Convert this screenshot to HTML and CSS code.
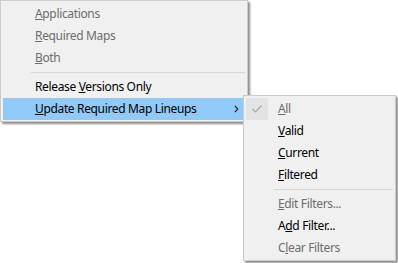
FILE: index.html
```html
<!DOCTYPE html>
<html>
<head>
<meta charset="utf-8">
<link rel="stylesheet" href="styles.css">
</head>
<body>
<div class="menu main">
  <div class="item disabled"><span class="label"><u>A</u>pplications</span></div>
  <div class="item disabled"><span class="label"><u>R</u>equired Maps</span></div>
  <div class="item disabled"><span class="label"><u>B</u>oth</span></div>
  <div class="sep"></div>
  <div class="item"><span class="label">Release <u>V</u>ersions Only</span></div>
  <div class="item active"><span class="label"><u>U</u>pdate Required Map Lineups</span>
    <svg class="arrow" width="5" height="8" viewBox="0 0 5 8"><polyline points="0.8,0.8 3.8,4 0.8,7.2" fill="none" stroke="#1a1a1a" stroke-width="1.1"/></svg>
  </div>
</div>
<div class="menu sub">
  <div class="item disabled checked">
    <span class="check"><svg width="12" height="10" viewBox="0 0 12 10"><polyline points="1.5,5 4.5,8 10.5,1.5" fill="none" stroke="#a8a8a8" stroke-width="1.2"/></svg></span>
    <span class="label"><u>A</u>ll</span></div>
  <div class="item"><span class="label"><u>V</u>alid</span></div>
  <div class="item"><span class="label"><u>C</u>urrent</span></div>
  <div class="item"><span class="label"><u>F</u>iltered</span></div>
  <div class="sep"></div>
  <div class="item disabled"><span class="label"><u>E</u>dit Filters...</span></div>
  <div class="item"><span class="label">A<u>d</u>d Filter...</span></div>
  <div class="item disabled"><span class="label">C<u>l</u>ear Filters</span></div>
</div>
</body>
</html>
```
FILE: styles.css
```css
html, body {
  margin: 0;
  padding: 0;
  background: #ffffff;
  width: 398px;
  height: 263px;
  overflow: hidden;
}
body {
  position: relative;
  font-family: "Noto Sans", "Open Sans", sans-serif;
  font-size: 12px;
  letter-spacing: -0.35px;
  color: #000;
}
.menu {
  background: #f0f0f0;
  border: 1px solid #cccccc;
  padding: 2px 2px 1px 2px;
  box-shadow: 2px 2px 2px rgba(0, 0, 0, 0.45);
  display: flex;
  flex-direction: column;
}
.main {
  width: 242px;
}
.sub {
  position: absolute;
  left: 243px;
  top: 95px;
  width: 147px;
}
.item {
  height: 22px;
  line-height: 22px;
  position: relative;
  display: flex;
  align-items: center;
  padding-left: 32px;
  white-space: nowrap;
}
.item u {
  text-decoration: underline;
  text-underline-offset: 1px;
}
.disabled {
  color: #6d6d6d;
}
.active {
  background: #91c9f7;
}
.sep {
  height: 1px;
  background: #d7d7d7;
  margin: 3px 0 3px 28px;
}
.arrow {
  position: absolute;
  left: 231px;
  top: 7px;
}
.check {
  position: absolute;
  left: 0;
  top: 0;
  width: 22px;
  height: 22px;
  background: #e3e3e3;
  display: flex;
  align-items: center;
  justify-content: center;
}
.check svg {
  display: block;
}
```
